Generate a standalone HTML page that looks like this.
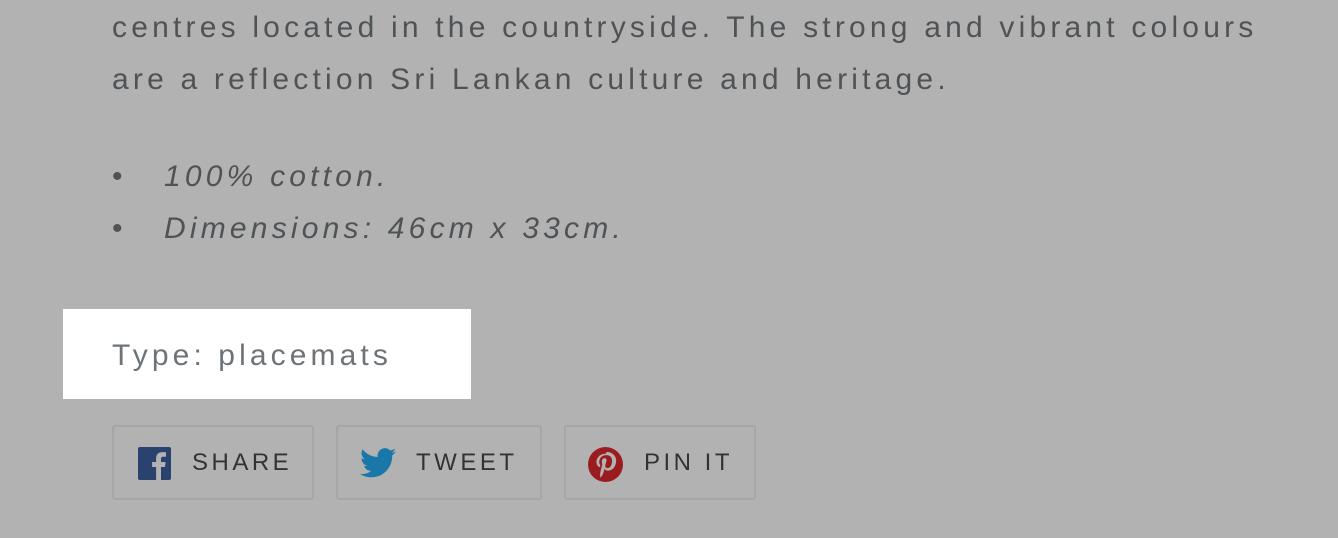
<!DOCTYPE html>
<html><head><style>
body{margin:0;width:1338px;height:538px;background:#b2b2b2;overflow:hidden;font-family:"Liberation Sans",sans-serif;position:relative}
.p{position:absolute;left:112px;color:#4f5356;font-size:30px;white-space:nowrap;letter-spacing:4.2px}
.i{font-style:italic}
.box{position:absolute;left:63px;top:309px;width:408px;height:90px;background:#fff}
.type{position:absolute;left:112px;top:339px;color:#6e7378;font-size:30px;letter-spacing:4.1px;white-space:nowrap}
.btn{position:absolute;top:425px;height:71px;border:2px solid #a6a6a6;border-radius:3px;box-sizing:content-box}
.btn span{position:absolute;top:22px;font-size:24px;letter-spacing:3.5px;color:#333}
.btn svg{position:absolute;top:20px}
</style></head><body>
<div class="p" style="top:11px">centres located in the countryside. The strong and vibrant colours</div>
<div class="p" style="top:63px">are a reflection Sri Lankan culture and heritage.</div>
<div class="p" style="top:160px;letter-spacing:0">•</div><div class="p i" style="top:160px;left:164px">100% cotton.</div>
<div class="p" style="top:212px;letter-spacing:0">•</div><div class="p i" style="top:212px;left:164px">Dimensions: 46cm x 33cm.</div>
<div class="box"></div>
<div class="type">Type: placemats</div>
<div class="btn" style="left:112px;width:198px"><svg style="left:24px" width="33" height="33" viewBox="0 0 33 33"><rect width="33" height="33" rx="2" fill="#2b416e"/><path d="M23 33V20h4l.6-5H23v-3c0-1.4.4-2.3 2.4-2.3H28V5.3c-.5 0-2-.2-3.7-.2-3.7 0-6.2 2.2-6.2 6.4V15h-4v5h4v13z" fill="#b2b2b2"/></svg><span style="left:78px">SHARE</span></div>
<div class="btn" style="left:336px;width:202px"><svg style="left:22px" width="36" height="32" viewBox="0 0 24 20"><path d="M24 2.4a9.8 9.8 0 0 1-2.8.8A4.9 4.9 0 0 0 23.3.5a9.9 9.9 0 0 1-3.1 1.2A4.9 4.9 0 0 0 11.8 6 14 14 0 0 1 1.700.9a4.9 4.9 0 0 0 1.5 6.6 4.9 4.9 0 0 1-2.2-.6 4.9 4.9 0 0 0 3.9 4.9 4.9 4.9 0 0 1-2.2.1 4.9 4.9 0 0 0 4.6 3.4A9.9 9.9 0 0 1 0 17.3 14 14 0 0 0 7.5 19.5c9.1 0 14-7.5 14-14v-.6A10 10 0 0 0 24 2.4z" fill="#1a78a8"/></svg><span style="left:78px">TWEET</span></div>
<div class="btn" style="left:564px;width:188px"><svg style="left:22px" width="35" height="35" viewBox="0 0 24 24"><circle cx="12" cy="12" r="12" fill="#9a1c1f"/><path d="M12.3 4.5c-4.3 0-6.5 3.1-6.5 5.7 0 1.6.6 3 1.9 3.5.2.1.4 0 .5-.2l.2-.8c.1-.2 0-.3-.1-.5-.4-.5-.6-1.1-.6-1.9 0-2.5 1.8-4.7 4.8-4.7 2.6 0 4 1.6 4 3.7 0 2.8-1.2 5.200-3.1 5.2-1 0-1.8-.9-1.6-1.9.3-1.2.9-2.6.9-3.5 0-.8-.4-1.5-1.3-1.5-1.1 0-1.9 1.1-1.9 2.6 0 .9.3 1.6.3 1.6l-1.3 5.4c-.4 1.6 0 3.5 0 3.7h.3c.1-.2 1.4-1.7 1.8-3.3l.7-2.7c.3.7 1.4 1.300 2.5 1.3 3.300 0 5.5-3 5.5-7 0-3-2.6-5.9-6.5-5.9z" fill="#b2b2b2"/></svg><span style="left:78px">PIN IT</span></div>
</body></html>
